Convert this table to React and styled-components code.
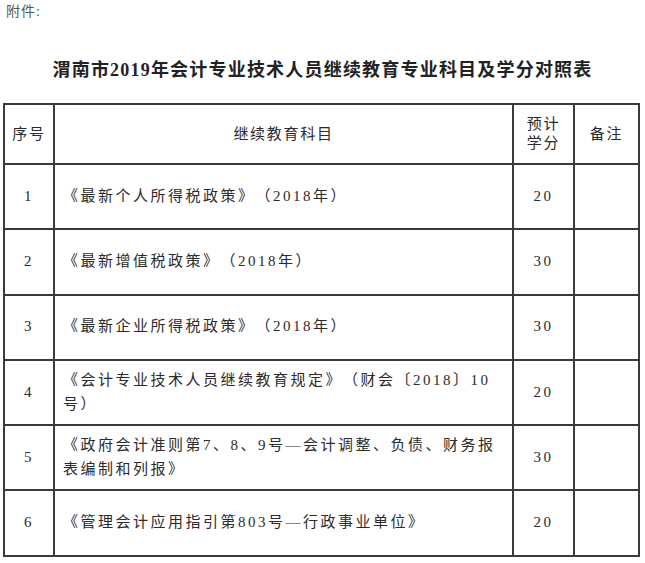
import styled, { createGlobalStyle } from 'styled-components';

const GlobalStyle = createGlobalStyle`
  html, body {
    margin: 0;
    padding: 0;
    background: #ffffff;
  }
  body {
    font-family: "Liberation Serif", "Noto Sans CJK SC", serif;
    color: #2b2b2b;
    text-spacing-trim: space-all;
  }
`;

const Page = styled.div`
  width: 645px;
  padding-top: 3px;
`;

const Attachment = styled.div`
  padding-left: 6px;
  font-size: 14px;
  line-height: 18px;
  letter-spacing: 1px;
  color: #575757;
`;

const Title = styled.h1`
  margin: 37px 0 0;
  text-align: center;
  font-size: 18px;
  line-height: 24px;
  font-weight: 700;
  letter-spacing: 1.2px;
  color: #222222;
`;

const Table = styled.table`
  margin: 21px 0 0 3px;
  width: 635px;
  border-collapse: collapse;
  table-layout: fixed;
  font-size: 15px;
`;

const HeadRow = styled.tr`
  height: 60px;
`;

const Row = styled.tr`
  height: 65.3px;
`;

const Cell = styled.td`
  border: 2px solid #3a3a3a;
  padding: ${({ $align }) => ($align === 'left' ? '0 0 0 8px' : '0')};
  text-align: ${({ $align }) => $align || 'center'};
  vertical-align: middle;
  white-space: pre;
  line-height: 23.5px;
  letter-spacing: 2.5px;
  color: #2b2b2b;
`;

const HeadCell = styled(Cell).attrs({ as: 'th' })`
  font-weight: 400;
  line-height: 19px;
  letter-spacing: 1.7px;
`;

const rows = [
  { no: 1, subject: '《最新个人所得税政策》（2018年）', credit: 20 },
  { no: 2, subject: '《最新增值税政策》（2018年）', credit: 30 },
  { no: 3, subject: '《最新企业所得税政策》（2018年）', credit: 30 },
  { no: 4, subject: '《会计专业技术人员继续教育规定》（财会〔2018〕10\n号）', credit: 20 },
  { no: 5, subject: '《政府会计准则第7、8、9号—会计调整、负债、财务报\n表编制和列报》', credit: 30 },
  { no: 6, subject: '《管理会计应用指引第803号—行政事业单位》', credit: 20 },
];

export default function App() {
  return (
    <Page>
      <GlobalStyle />
      <Attachment>附件:</Attachment>
      <Title>渭南市2019年会计专业技术人员继续教育专业科目及学分对照表</Title>
      <Table>
        <colgroup>
          <col style={{ width: 50 }} />
          <col style={{ width: 459 }} />
          <col style={{ width: 61 }} />
          <col style={{ width: 65 }} />
        </colgroup>
        <thead>
          <HeadRow>
            <HeadCell>序号</HeadCell>
            <HeadCell>继续教育科目</HeadCell>
            <HeadCell>{'预计\n学分'}</HeadCell>
            <HeadCell>备注</HeadCell>
          </HeadRow>
        </thead>
        <tbody>
          {rows.map((r) => (
            <Row key={r.no}>
              <Cell>{r.no}</Cell>
              <Cell $align="left">{r.subject}</Cell>
              <Cell>{r.credit}</Cell>
              <Cell />
            </Row>
          ))}
        </tbody>
      </Table>
    </Page>
  );
}
